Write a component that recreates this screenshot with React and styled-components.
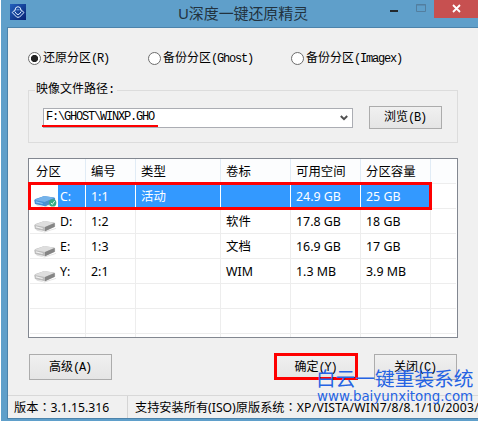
import React from 'react';
import styled, { createGlobalStyle, css } from 'styled-components';

const GlobalStyle = createGlobalStyle`
  * {
    box-sizing: border-box;
  }

  body {
    margin: 0;
    overflow: hidden;
    background: #fff;
    color: #000;
    font-family: "Noto Sans", "Noto Sans CJK SC", sans-serif;
    font-size: 12px;
  }
`;

const Window = styled.div`
  position: relative;
  width: 477px;
  height: 421px;
  margin-left: 1px;
  padding: 0 0 2px 6px;
  display: flex;
  flex-direction: column;
  overflow: hidden;
  background: #5f9fca;
`;

const TitleBar = styled.header`
  position: relative;
  height: 27px;
  flex: none;
  display: flex;
  align-items: flex-start;
  padding: 4px 0 0 3px;
`;

const Title = styled.h1`
  flex: 1;
  margin: 0 0 0 152px;
  font: 400 15px/18px "Noto Sans", "Noto Sans CJK SC", sans-serif;
  letter-spacing: -0.1px;
  color: #22323e;
  white-space: nowrap;
`;

const WindowControls = styled.div`
  display: flex;
  align-items: flex-start;
  height: 18px;
  margin-top: -4px;
`;

const CloseControl = styled.button`
  width: 44px;
  height: 18px;
  padding: 0 0 1px 1px;
  border: 0;
  background: #c75050;
  display: flex;
  align-items: center;
  justify-content: center;
`;

const Client = styled.main`
  flex: 1;
  display: flex;
  flex-direction: column;
  border: solid #4c83ab;
  border-width: 1px 0 1px 1px;
  background: #f0f0f0;
`;

const RadioRow = styled.div`
  display: grid;
  grid-template-columns: 120px 143px 150px;
  margin: 22px 0 0 20px;
  height: 15px;
`;

const pixelText = css`
  font-family: "Liberation Mono", "Noto Sans CJK SC", monospace;
  font-size: 12px;
  white-space: nowrap;
`;

const Latin = styled.span`
  display: inline-block;
  font-family: "Liberation Mono", monospace;
  font-size: 12px;
  letter-spacing: -1.2px;
`;

const RadioLabel = styled.label`
  ${pixelText}
  display: flex;
  align-items: center;
  line-height: 15px;
`;

const RadioText = styled.span`
  padding-top: 2px;
`;

const RadioDot = styled.span`
  width: 13px;
  height: 13px;
  margin-right: 2px;
  border: 1px solid #6c6c6c;
  border-radius: 50%;
  background: ${({ $checked }) =>
    $checked ? 'radial-gradient(circle, #222 0 3.2px, #fff 4px)' : '#fff'};
`;

const PathGroup = styled.fieldset`
  height: 61px;
  width: 430px;
  margin: 17px 0 0 20px;
  padding: 9px 0 0 14px;
  border: 1px solid #dcdcdc;
  display: flex;
  align-items: flex-start;
`;

const Legend = styled.legend`
  ${pixelText}
  height: 16px;
  margin-left: -8px;
  padding: 0 2px 0 1px;
  line-height: 16px;
`;

const Combo = styled.div`
  ${pixelText}
  width: 310px;
  height: 20px;
  margin-top: 1px;
  padding: 0 4px 0 2px;
  display: flex;
  align-items: center;
  justify-content: space-between;
  border: 1px solid #abadb3;
  background: #fff;
  line-height: 16px;

  & > ${Latin} {
    margin-top: -3px;
  }
`;

const PushButton = styled.button`
  ${pixelText}
  width: ${({ $width }) => $width}px;
  height: ${({ $height }) => $height}px;
  margin: 0;
  padding: 0 1px 2px 0;
  border: 1px solid #acacac;
  background: linear-gradient(#f0f0f0, #e5e5e5);
  color: #000;
`;

const BrowseButton = styled(PushButton)`
  margin-left: 16px;
  margin-top: -1px;
  padding-bottom: 5px;
`;

const List = styled.section`
  width: 430px;
  height: 180px;
  margin: 15px 0 0 20px;
  padding: 0 1px 1px;
  border: 1px solid #828790;
  background: #fff;
  font-size: 12.4px;
`;

const Row = styled.div`
  display: grid;
  grid-template-columns: 56px 50px 85px 70px 70px 70px 1fr;
  height: 25px;
  border-bottom: 1px solid #ededed;
  line-height: 26px;

  &:last-child {
    height: 3px;
    border: 0;
  }
`;

const Cell = styled.div`
  display: flex;
  height: 100%;
  min-height: 0;
  padding-left: 5px;
  border-right: 1px solid ${({ $selected }) => ($selected ? '#fff' : '#ededed')};
  background: ${({ $selected }) => ($selected ? '#3399ff' : 'transparent')};
  color: ${({ $selected }) => ($selected ? '#fff' : '#000')};
  white-space: nowrap;

  &:last-child {
    border-right: 0;
  }
`;

const HeaderCell = styled(Cell)`
  border-color: #e1ecf6;
  background: #fcfdfe;

  &:first-child {
    padding-left: 6px;
  }
`;

const DriveCell = styled(Cell)`
  padding-left: 0;
`;

const DriveIconBox = styled.span`
  width: 28px;
  margin-right: 2px;
  display: flex;
  align-items: flex-end;
  padding-left: 3px;
  background: #fff;
`;

const Actions = styled.div`
  display: flex;
  width: 428px;
  margin: 16px 0 0 21px;

  & > :nth-child(2) {
    margin-left: auto;
    margin-right: 17px;
  }
`;

const StatusBar = styled.footer`
  display: flex;
  height: 23px;
  margin-top: auto;
  border-top: 1px solid #d8d8d8;
  font-size: 12.2px;
  line-height: 23px;
  white-space: nowrap;
`;

const Version = styled.div`
  flex: none;
  width: 120px;
  padding-left: 6px;
  border-right: 1px solid #d4d4d4;
`;

const Support = styled.div`
  flex: none;
  padding-left: 7px;
`;

const Systems = styled.span`
  letter-spacing: 0.23px;
`;

// The JP face centres the full-width colon in its box
const WideColon = styled.span`
  font-family: "Noto Sans CJK JP", sans-serif;
`;

// Red callouts drawn over the dialog
const Marker = styled.div`
  position: absolute;
  left: ${({ $x }) => $x}px;
  top: ${({ $y }) => $y}px;
  width: ${({ $w }) => $w}px;
  height: ${({ $h }) => $h}px;
  border: 3px solid #fe0000;
`;

const Underline = styled(Marker)`
  border-width: 2px 0 0;
`;

const Watermark = styled.div`
  position: absolute;
  left: 315px;
  top: 367px;
  color: #2563e3;
  font-size: 19.7px;
  line-height: 24px;
  white-space: nowrap;
`;

const WatermarkUrl = styled.div`
  font: 13.4px/14px "DejaVu Sans", sans-serif;
  margin: -1px 0 0 1px;
`;

const COLUMNS = ['分区', '编号', '类型', '卷标', '可用空间', '分区容量', ''];

const PARTITIONS = [
  { drive: 'C:', values: ['1:1', '活动', '', '24.9 GB', '25 GB'], selected: true },
  { drive: 'D:', values: ['1:2', '', '软件', '17.8 GB', '18 GB'] },
  { drive: 'E:', values: ['1:3', '', '文档', '16.9 GB', '17 GB'] },
  { drive: 'Y:', values: ['2:1', '', 'WIM', '1.3 MB', '3.9 MB'] },
];

const AppIcon = () => (
  <svg width="16" height="16" viewBox="0 0 16 16">
    <defs>
      <linearGradient id="appBlue" x2="1" y2="1">
        <stop stopColor="#2462bd" />
        <stop offset="1" stopColor="#062174" />
      </linearGradient>
    </defs>
    <rect width="16" height="16" fill="url(#appBlue)" />
    <path
      d="M5.2 5.6 2.2 8.5 6.8 13.2h2.6L14 8.5l-3.2-2.9M5 6.6 5.8 3.6Q8 1.8 10.2 3.6L11 6.6M4.6 7.4 7 10.4h2l2.4-3"
      fill="none"
      stroke="#dcecff"
      strokeWidth="1"
    />
    <path d="M6.5 5.8h3" stroke="#7fa8df" />
  </svg>
);

const DriveIcon = ({ selected }) => {
  const [top, left, right] = selected
    ? ['#75b3ea', '#4690d8', '#4d91ca']
    : ['#dedede', '#bcbcbc', '#858585'];

  return (
    <svg width="25" height="15" viewBox="0 0 26 15">
      <path d="M3 11 11 14 24 10v1l-12 3.7L4 13z" fill="#ccc" opacity=".6" />
      <path d="M1.3 7.2 2.5 6 11 3q1-.4 2 0l9 1.3 1 1v3.5L12.5 13.5 2 11.2z" fill={left} />
      <path d="M1.5 7 11 3q1-.4 2 0l9.5 1.6L12.5 9z" fill={top} />
      <path d="m12.5 9 10-4.2v4.1l-10 4.6z" fill={right} />
      <path d="m3 8.3 7 1.7v1.2L3 9.7z" fill={selected ? '#8dc9f8' : '#f3f3f3'} />
      {selected && (
        <>
          <circle cx="20.5" cy="10" r="3.8" fill="#37a984" />
          <path d="m18.7 10 1.4 1.6 2.4-3.5" fill="none" stroke="#d8fff0" />
        </>
      )}
    </svg>
  );
};

const RadioOption = ({ label, hint, checked }) => (
  <RadioLabel>
    <RadioDot $checked={checked} />
    <RadioText>
      {label}
      <Latin>{hint}</Latin>
    </RadioText>
  </RadioLabel>
);

const PartitionRow = ({ drive, values, selected }) => (
  <Row>
    <DriveCell $selected={selected}>
      <DriveIconBox>
        {drive && <DriveIcon selected={selected} />}
      </DriveIconBox>
      {drive}
    </DriveCell>
    {values.map((value, i) => (
      <Cell key={i} $selected={selected}>{value}</Cell>
    ))}
    <Cell />
  </Row>
);

const EMPTY = ['', '', '', '', ''];

const App = () => (
  <>
    <GlobalStyle />
    <Window>
      <TitleBar>
        <AppIcon />
        <Title>U深度一键还原精灵</Title>
        <WindowControls>
          <svg width="44" height="18" viewBox="0 0 44 18">
            <path d="M0 10h8v2H0z" fill="#22282d" />
            <path d="M26.5 4.5h9v7h-9zM26 5h10" fill="none" stroke="#537e9f" />
          </svg>
          <CloseControl aria-label="关闭">
            <svg width="9" height="9" viewBox="0 0 9 9">
              <path d="m1 1 7 7m0-7L1 8" stroke="#fff" strokeWidth="1.8" />
            </svg>
          </CloseControl>
        </WindowControls>
      </TitleBar>
      <Client>
        <RadioRow>
          <RadioOption label="还原分区" hint="(R)" checked />
          <RadioOption label="备份分区" hint="(Ghost)" />
          <RadioOption label="备份分区" hint="(Imagex)" />
        </RadioRow>
        <PathGroup>
          <Legend>映像文件路径:</Legend>
          <Combo>
            <Latin>F:\GHOST\WINXP.GHO</Latin>
            <svg width="8" height="6" viewBox="0 0 8 6">
              <path d="m.8 1 3.2 3.2L7.2 1" fill="none" stroke="#505050" strokeWidth="2" />
            </svg>
          </Combo>
          <BrowseButton $width={73} $height={23}>浏览<Latin>(B)</Latin></BrowseButton>
        </PathGroup>
        <List>
          <Row>
            {COLUMNS.map((name, i) => (
              <HeaderCell key={i}>{name}</HeaderCell>
            ))}
          </Row>
          {PARTITIONS.map((p) => (
            <PartitionRow key={p.drive} {...p} />
          ))}
          <PartitionRow values={EMPTY} />
          <PartitionRow values={EMPTY} />
          <PartitionRow values={EMPTY} />
        </List>
        <Actions>
          <PushButton $width={83} $height={26}>高级<Latin>(A)</Latin></PushButton>
          <PushButton $width={82} $height={26}>确定<Latin>(Y)</Latin></PushButton>
          <PushButton $width={83} $height={26}>关闭<Latin>(C)</Latin></PushButton>
        </Actions>
        <StatusBar>
          <Version>版本<WideColon>：</WideColon>3.1.15.316</Version>
          <Support>
            支持安装所有(ISO)原版系统<WideColon>：</WideColon>
            <Systems>XP/VISTA/WIN7/8/8.1/10/2003/</Systems>
          </Support>
        </StatusBar>
      </Client>
      <Underline $x={41} $y={125} $w={116} $h={2} />
      <Marker $x={27} $y={182} $w={404} $h={28} />
      <Marker $x={273} $y={353} $w={84} $h={27} />
      <Watermark>
        白云一键重装系统
        <WatermarkUrl>www.baiyunxitong.com</WatermarkUrl>
      </Watermark>
    </Window>
  </>
);

export default App;
